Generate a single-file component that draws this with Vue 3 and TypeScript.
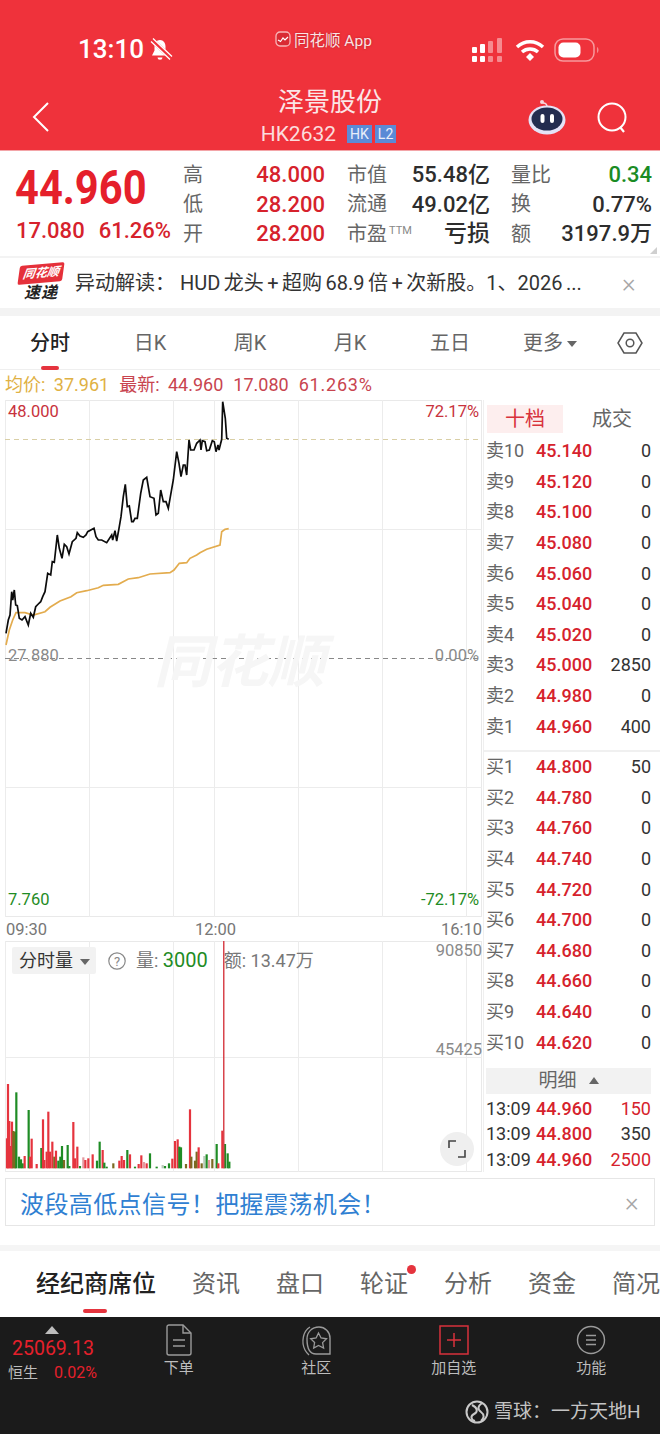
<script setup lang="ts">
const stats = [
  [
    { label: '高', value: '48.000', tone: 'red' },
    { label: '低', value: '28.200', tone: 'red' },
    { label: '开', value: '28.200', tone: 'red' },
  ],
  [
    { label: '市值', value: '55.48亿', tone: 'dark' },
    { label: '流通', value: '49.02亿', tone: 'dark' },
    { label: '市盈', sup: 'TTM', value: '亏损', tone: 'dark big' },
  ],
  [
    { label: '量比', value: '0.34', tone: 'green' },
    { label: '换', value: '0.77%', tone: 'dark' },
    { label: '额', value: '3197.9万', tone: 'dark' },
  ],
]

const periods = ['分时', '日K', '周K', '月K', '五日']

const sells = [
  ['卖10', '45.140', '0'], ['卖9', '45.120', '0'], ['卖8', '45.100', '0'], ['卖7', '45.080', '0'],
  ['卖6', '45.060', '0'], ['卖5', '45.040', '0'], ['卖4', '45.020', '0'], ['卖3', '45.000', '2850'],
  ['卖2', '44.980', '0'], ['卖1', '44.960', '400'],
]
const buys = [
  ['买1', '44.800', '50'], ['买2', '44.780', '0'], ['买3', '44.760', '0'], ['买4', '44.740', '0'],
  ['买5', '44.720', '0'], ['买6', '44.700', '0'], ['买7', '44.680', '0'], ['买8', '44.660', '0'],
  ['买9', '44.640', '0'], ['买10', '44.620', '0'],
]
const ticks = [
  { time: '13:09', price: '44.960', vol: '150', up: true },
  { time: '13:09', price: '44.800', vol: '350', up: false },
  { time: '13:09', price: '44.960', vol: '2500', up: true },
]

const bottomTabs = ['经纪商席位', '资讯', '盘口', '轮证', '分析', '资金', '简况']

const gridX = [5, 89, 173, 214, 298, 382, 466]

// traced at 3x, so everything gets divided by 3 below
const priceRaw = [18,700,25,660,30,645,35,575,38,600,43,570,47,615,52,617,58,655,66,660,75,650,85,675,92,640,100,652,107,620,115,612,122,605,128,590,135,575,143,520,152,525,157,485,163,487,172,405,178,445,186,475,193,433,200,440,207,462,217,425,228,415,232,398,240,408,250,412,258,405,263,395,282,385,288,410,295,420,305,420,320,428,335,405,338,420,345,392,350,423,357,385,363,350,370,290,376,253,382,320,388,318,395,365,400,365,405,355,412,355,422,280,430,240,440,232,450,290,462,295,468,345,475,340,482,270,490,305,498,305,505,325,520,240,530,155,537,190,543,230,550,195,555,195,560,225,567,120,572,150,582,150,590,130,600,120,603,150,607,122,615,125,620,152,628,150,637,122,643,125,648,155,654,135,657,150,665,118,668,5,676,55,680,115,686,118]
const avgRaw = [18,735,28,690,38,660,48,638,75,638,100,645,135,635,150,622,180,603,213,590,230,578,260,572,295,563,310,556,355,553,385,537,415,533,450,522,510,518,522,510,538,490,560,488,570,475,590,465,600,458,620,448,660,435,665,395,675,388,686,386]

function toPoints(raw: number[]): string {
  const out: string[] = []
  for (let i = 0; i < raw.length; i += 2) {
    out.push(`${(raw[i] / 3).toFixed(1)},${(raw[i + 1] / 3).toFixed(1)}`)
  }
  return out.join(' ')
}
const pricePoints = toPoints(priceRaw)
const avgPoints = toPoints(avgRaw)

const barColors: Record<string, string> = {
  r: '#e5343e', g: '#1f8c25', b: '#7b6a22', p: '#e39aa0', s: '#b9c9b9',
}
const rawBars: [number, number, string][] = [
  [21,655,'r'],[24,492,'r'],[28,603,'r'],[32,678,'r'],[36,605,'r'],[40,633,'b'],[45,635,'b'],[49,517,'g'],
  [57,710,'g'],[63,718,'g'],[68,730,'g'],[74,708,'r'],[86,570,'g'],[90,710,'r'],[95,656,'r'],[110,732,'r'],
  [124,684,'g'],[129,598,'r'],[133,720,'r'],[140,695,'r'],[145,575,'r'],[150,695,'r'],[157,665,'r'],[163,710,'b'],
  [168,692,'r'],[175,722,'g'],[181,710,'g'],[186,678,'g'],[192,720,'b'],[203,675,'g'],[208,738,'g'],[220,606,'r'],
  [225,715,'r'],[232,680,'r'],[240,738,'g'],[250,712,'p'],[256,720,'r'],[265,715,'r'],[278,703,'r'],[291,722,'g'],
  [299,665,'g'],[308,690,'r'],[313,728,'g'],[320,740,'g'],[340,730,'b'],[358,722,'r'],[365,708,'r'],[372,720,'r'],
  [382,690,'g'],[390,703,'r'],[405,740,'g'],[416,732,'r'],[424,706,'r'],[432,726,'p'],[440,730,'r'],[450,700,'g'],
  [470,740,'g'],[488,735,'s'],[495,738,'g'],[507,730,'g'],[517,716,'r'],[525,663,'r'],[533,658,'r'],[538,680,'g'],
  [543,682,'g'],[558,732,'b'],[570,568,'r'],[574,710,'b'],[585,722,'b'],[590,695,'b'],[596,682,'r'],[605,730,'b'],
  [613,708,'s'],[620,703,'g'],[627,720,'p'],[637,717,'b'],[650,672,'g'],[655,730,'r'],[667,632,'r'],[675,672,'g'],
  [683,700,'g'],[688,725,'g'],
]
const baseY = 745 / 3 - 21
const volBars = rawBars.map(([x, top, c]) => {
  const y = top / 3 - 21
  return { x: x / 3 - 1.1, y, h: baseY - y, color: barColors[c] }
})
</script>

<template>
  <div class="page">
    <header class="topbar">
      <div class="status">
        <div class="status-left">
          <span class="clock">13:10</span>
          <svg class="bell" width="24" height="24" viewBox="0 0 24 24">
            <path d="M11 3C7.500 3 5.500 6 5.500 9.500v4L3 18.500h16l-2.500-5v-4C16.500 6 14.500 3 11 3z" fill="#fff" />
            <path d="M8.500 20.500h5a2.500 2.300 0 0 1-5 0z" fill="#fff" />
            <path d="M3 3l19 18" stroke="#f1333d" stroke-width="4.500" />
            <path d="M2 4.500l19 18M4 1.500l19 18" stroke="#fff" stroke-width="1.300" />
          </svg>
        </div>
        <div class="app-tag">
          <svg width="16" height="16" viewBox="0 0 16 16">
            <rect x="1" y="1" width="14" height="14" rx="4" fill="#d92a33" stroke="#f8b6b8" stroke-width="1.300" />
            <path d="M3 9l2.500 1.500L8 7l2 2 3-3" stroke="#fff" stroke-width="1.200" fill="none" />
          </svg>
          <span>同花顺 App</span>
        </div>
        <div class="status-right">
          <svg width="34" height="28" viewBox="0 0 34 28">
            <g fill="#fff">
              <rect x="1" y="11" width="5" height="6" rx="1" /><rect x="1" y="20" width="5" height="6" rx="1" />
              <rect x="9" y="8" width="5" height="9" rx="1" /><rect x="9" y="20" width="5" height="6" rx="1" />
            </g>
            <g fill="#f68a8f">
              <rect x="17" y="5" width="5" height="12" rx="1" /><rect x="17" y="20" width="5" height="6" rx="1" />
              <rect x="26" y="2" width="5" height="15" rx="1" /><rect x="26" y="20" width="5" height="6" rx="1" />
            </g>
          </svg>
          <svg class="wifi" width="30" height="24" viewBox="0 0 30 24">
            <path d="M2 9c7.500-7 18.500-7 26 0" stroke="#fff" stroke-width="3.400" fill="none" />
            <path d="M7 14c4.500-4 11.500-4 16 0" stroke="#fff" stroke-width="3.400" fill="none" />
            <path d="M11 19l4-4 4 4-4 4z" fill="#fff" />
          </svg>
          <svg width="46" height="24" viewBox="0 0 46 24">
            <rect x="1" y="1" width="39" height="22" rx="8" fill="none" stroke="#f8999d" stroke-width="1.500" />
            <rect x="4.500" y="4.500" width="22" height="15" rx="5" fill="#fff" />
            <path d="M43 9c2 1 2 5 0 6z" fill="#f68a8f" />
          </svg>
        </div>
      </div>
      <div class="titlebar">
        <svg class="back" width="20" height="32" viewBox="0 0 20 32">
          <path d="M17 2L3 16l14 14" stroke="#fff" stroke-width="2" fill="none" />
        </svg>
        <div class="title">
          <div class="name">泽景股份</div>
          <div class="code">
            <span>HK2632</span>
            <em>HK</em>
            <em>L2</em>
          </div>
        </div>
        <svg class="robot" width="40" height="36" viewBox="0 0 40 36">
          <circle cx="15" cy="3" r="2" fill="#f7d5dc" />
          <path d="M16 4c3 0 4 2 4 4" stroke="#f7d5dc" stroke-width="1.500" fill="none" />
          <ellipse cx="20" cy="21" rx="18.500" ry="14.500" fill="#e4e2f6" />
          <ellipse cx="20" cy="20" rx="15.500" ry="11.500" fill="#232c4f" />
          <rect x="13.500" y="15" width="4" height="9" rx="2" fill="#fff" />
          <rect x="23" y="15" width="4" height="9" rx="2" fill="#fff" />
        </svg>
        <svg class="search" width="32" height="34" viewBox="0 0 32 34">
          <circle cx="16" cy="16" r="13.500" stroke="#fff" stroke-width="2" fill="none" />
          <path d="M24 26l4 5" stroke="#fff" stroke-width="2.200" />
        </svg>
      </div>
    </header>

    <section class="quote">
      <div class="price-block">
        <div class="price">44.960</div>
        <div class="change"><span>17.080</span><span>61.26%</span></div>
      </div>
      <div class="stat-wrap">
        <div v-for="(group, i) in stats" :key="i" class="stat-group" :class="'group-' + i">
          <template v-for="item in group" :key="item.label">
            <span class="stat-label">{{ item.label }}<sup v-if="item.sup">{{ item.sup }}</sup></span>
            <span class="stat-value" :class="item.tone">{{ item.value }}</span>
          </template>
        </div>
      </div>
      <i class="corner"></i>
    </section>

    <section class="news">
      <div class="news-logo">
        <span class="logo-top">同花顺</span>
        <span class="logo-bottom">速递</span>
      </div>
      <p class="news-text">异动解读：<span>HUD 龙头 + 超购 68.9 倍 + 次新股。1、2026 ...</span></p>
      <span class="close">×</span>
    </section>

    <nav class="periods">
      <div v-for="(p, i) in periods" :key="p" class="period" :class="{ active: i === 0 }">{{ p }}</div>
      <div class="period more">更多<i class="caret"></i></div>
      <div class="hex">
        <svg width="26" height="24" viewBox="0 0 26 24">
          <path d="M7 2h12l6 10-6 10H7L1 12z" fill="none" stroke="#555" stroke-width="1.500" />
          <circle cx="13" cy="12" r="3.800" fill="none" stroke="#555" stroke-width="1.500" />
        </svg>
      </div>
    </nav>

    <div class="infoline">
      <span class="gold">均价: 37.961</span>
      <span>最新: 44.960</span>
      <span>17.080</span>
      <span class="pct">61.263%</span>
    </div>

    <main class="market">
      <div class="charts">
        <div class="price-chart">
          <svg width="482" height="517" viewBox="0 0 482 517">
            <rect x="5.500" y="0.500" width="476" height="516" fill="none" stroke="#e9e9e9" />
            <line v-for="x in gridX" :key="x" :x1="x + 0.5" :x2="x + 0.5" y1="0" y2="517" stroke="#ececec" />
            <line x1="5" x2="482" y1="129.500" y2="129.500" stroke="#ececec" />
            <line x1="5" x2="482" y1="387.500" y2="387.500" stroke="#ececec" />
            <line x1="5" x2="482" y1="39.500" y2="39.500" stroke="#d9cfa6" stroke-dasharray="5 4" />
            <line x1="5" x2="482" y1="258.500" y2="258.500" stroke="#888" stroke-dasharray="5 4" />
            <text class="wm" x="154" y="282">同花顺</text>
            <polyline :points="avgPoints" fill="none" stroke="#e3ac4e" stroke-width="1.700" />
            <polyline :points="pricePoints" fill="none" stroke="#0c0c0c" stroke-width="1.700" />
            <text class="axis" x="8" y="17" fill="#c8323c">48.000</text>
            <text class="axis" x="479" y="17" text-anchor="end" fill="#c8323c">72.17%</text>
            <text class="axis" x="8" y="261" fill="#8a8a8a">27.880</text>
            <text class="axis" x="479" y="261" text-anchor="end" fill="#8a8a8a">0.00%</text>
            <text class="axis" x="8" y="505" fill="#1f8c25">7.760</text>
            <text class="axis" x="479" y="505" text-anchor="end" fill="#1f8c25">-72.17%</text>
          </svg>
        </div>
        <div class="time-row">
          <span>09:30</span>
          <span class="noon">12:00</span>
          <span>16:10</span>
        </div>
        <div class="vol-chart">
          <svg width="482" height="231" viewBox="0 0 482 231">
            <rect x="5.500" y="0.500" width="476" height="230" fill="none" stroke="#e9e9e9" />
            <line v-for="x in gridX" :key="x" :x1="x + 0.5" :x2="x + 0.5" y1="0" y2="231" stroke="#ececec" />
            <line x1="5" x2="482" y1="116.500" y2="116.500" stroke="#ececec" />
            <rect v-for="(b, i) in volBars" :key="i" :x="b.x" :y="b.y" width="2.200" :height="b.h" :fill="b.color" />
            <rect x="223" y="0" width="1.500" :height="baseY" fill="#d8444c" />
            <text class="axis" x="482" y="15" text-anchor="end" fill="#8a8a8a">90850</text>
            <text class="axis" x="482" y="114" text-anchor="end" fill="#8a8a8a">45425</text>
          </svg>
          <div class="vol-head">
            <div class="vol-select">分时量<i class="caret dark"></i></div>
            <svg width="20" height="20" viewBox="0 0 20 20">
              <circle cx="10" cy="10" r="8.200" fill="none" stroke="#888" stroke-width="1.200" />
              <text x="10" y="14.500" text-anchor="middle" class="help">?</text>
            </svg>
            <span class="vol-num">量: <b>3000</b></span>
            <span class="vol-amt">额: 13.47万</span>
          </div>
          <button class="expand" type="button">
            <svg width="18" height="18" viewBox="0 0 18 18">
              <path d="M1 8V1h7M17 10v7h-7" fill="none" stroke="#444" stroke-width="1.600" />
            </svg>
          </button>
        </div>
      </div>

      <aside class="book">
        <div class="book-tabs">
          <div class="book-tab on">十档</div>
          <div class="book-tab">成交</div>
        </div>
        <div class="levels">
          <div v-for="r in sells" :key="r[0]" class="level">
            <span class="lv">{{ r[0] }}</span><span class="px">{{ r[1] }}</span><span class="qty">{{ r[2] }}</span>
          </div>
        </div>
        <div class="levels buys">
          <div v-for="r in buys" :key="r[0]" class="level">
            <span class="lv">{{ r[0] }}</span><span class="px">{{ r[1] }}</span><span class="qty">{{ r[2] }}</span>
          </div>
        </div>
        <div class="detail-head">明细<i class="up"></i></div>
        <div v-for="(t, i) in ticks" :key="i" class="tick">
          <span class="tm">{{ t.time }}</span>
          <span class="px">{{ t.price }}</span>
          <span class="qty" :class="{ red: t.up }">{{ t.vol }}</span>
        </div>
      </aside>
    </main>

    <div class="promo">
      <span>波段高低点信号！把握震荡机会！</span>
      <span class="close">×</span>
    </div>

    <nav class="bottom-tabs">
      <div v-for="(t, i) in bottomTabs" :key="t" class="btab" :class="{ active: i === 0, dot: t === '轮证' }">{{ t }}</div>
    </nav>

    <footer class="dock">
      <div class="dock-row">
        <div class="index">
          <i class="tri"></i>
          <div class="idx-val">25069.13</div>
          <div class="idx-sub"><span>恒生</span><b>0.02%</b></div>
        </div>
        <div class="dock-item">
          <svg width="28" height="32" viewBox="0 0 28 32">
            <path d="M2 3a2 2 0 0 1 2-2h14l8 8v20a2 2 0 0 1-2 2H4a2 2 0 0 1-2-2z" fill="none" stroke="#9a9a9a" stroke-width="1.400" />
            <path d="M18 1v8h8M8 16h12M8 22h12" fill="none" stroke="#9a9a9a" stroke-width="1.400" />
          </svg>
          <span>下单</span>
        </div>
        <div class="dock-item">
          <svg width="32" height="32" viewBox="0 0 32 32">
            <path d="M10 3C3 7 1 18 5 26c1 2 2 3 4 5" fill="none" stroke="#9a9a9a" stroke-width="1.300" />
            <path d="M19 3c6 0 11 5 11 11v16H16C10 30 7 24 7 15 7 8 12 3 19 3z" fill="none" stroke="#9a9a9a" stroke-width="1.400" />
            <path d="M18.500 9l2.600 5 5.400.8-3.900 3.800 1 5.400-5.100-2.600-4.800 2.600.9-5.400-3.900-3.800 5.400-.8z" fill="none" stroke="#9a9a9a" stroke-width="1.300" />
          </svg>
          <span>社区</span>
        </div>
        <div class="dock-item">
          <svg width="30" height="32" viewBox="0 0 30 32">
            <rect x="1" y="2" width="28" height="28" fill="none" stroke="#d8323c" stroke-width="1.500" />
            <path d="M15 9v14M8 16h14" stroke="#d8323c" stroke-width="1.500" />
          </svg>
          <span>加自选</span>
        </div>
        <div class="dock-item">
          <svg width="30" height="32" viewBox="0 0 30 32">
            <circle cx="15" cy="16" r="13.500" fill="none" stroke="#9a9a9a" stroke-width="1.400" />
            <path d="M10 11.500h10M10 16h10M10 20.500h10" stroke="#9a9a9a" stroke-width="1.400" />
          </svg>
          <span>功能</span>
        </div>
      </div>
      <div class="credit">
        <svg width="24" height="24" viewBox="0 0 24 24">
          <circle cx="12" cy="12" r="10.500" fill="none" stroke="#c9c9c9" stroke-width="2" />
          <path d="M7 5c6 3 6 7 2 9s-3 6 1 7M17 3c-4 3-5 6-1 9s3 6 0 9" fill="none" stroke="#c9c9c9" stroke-width="2" />
        </svg>
        <span>雪球：一方天地H</span>
      </div>
    </footer>
  </div>
</template>

<style>
html,
body {
  margin: 0;
  background: #fff;
}
</style>

<style scoped>
.page {
  width: 660px;
  height: 1434px;
  overflow: hidden;
  display: flex;
  flex-direction: column;
  background: #fff;
  font-family: Roboto, "Noto Sans CJK SC", sans-serif;
  color: #333;
}

.topbar {
  height: 150px;
  flex: none;
  background: #ef323b;
  color: #fff;
  border-bottom: 1px solid #f3a5a8;
  box-sizing: content-box;
}

.status {
  height: 84px;
  position: relative;
  display: flex;
  justify-content: space-between;
  padding: 0 60px 0 78px;
}

.status-left {
  display: flex;
  align-items: center;
  gap: 5px;
  padding-top: 14px;
  height: 70px;
}

.clock {
  font-size: 26px;
  font-weight: 500;
}

.app-tag {
  position: absolute;
  left: 275px;
  top: 28px;
  display: flex;
  align-items: center;
  gap: 3px;
  font-size: 15.500px;
  color: #fbe3e4;
  text-shadow: 0 0 2px rgba(110, 10, 20, 0.5);
}

.status-right {
  display: flex;
  align-items: center;
  gap: 10px;
  padding-top: 16px;
  height: 68px;
  margin-right: 2px;
}

.status-right svg:last-child {
  margin-right: -2px;
  margin-left: -1px;
}

.titlebar {
  position: relative;
  height: 66px;
  display: flex;
  justify-content: center;
}

.back {
  position: absolute;
  left: 31px;
  top: 17px;
}

.title {
  text-align: center;
  padding-top: 1px;
}

.name {
  font-size: 26px;
  line-height: 34px;
  color: #fbe6e7;
}

.code {
  display: flex;
  align-items: center;
  gap: 3px;
  font-size: 21px;
  line-height: 26px;
  margin-top: 2px;
  margin-left: -3px;
  color: #fbdcdd;
}

.code em {
  font-style: normal;
  font-size: 14px;
  line-height: 18px;
  padding: 0 3px;
  background: #5b8ad6;
  color: #e8eefa;
}

.code span {
  margin-right: 8px;
}

.robot {
  position: absolute;
  left: 527px;
  top: 15px;
}

.search {
  position: absolute;
  left: 596px;
  top: 17px;
}

.quote {
  position: relative;
  height: 105px;
  flex: none;
  display: flex;
  padding-left: 15px;
  box-sizing: border-box;
}

.price-block {
  width: 168px;
  flex: none;
}

.price {
  font-size: 49px;
  font-weight: 700;
  color: #e5202b;
  line-height: 50px;
  margin-top: 12px;
  transform: scaleX(0.85);
  transform-origin: left center;
  white-space: nowrap;
}

.change {
  display: flex;
  gap: 14px;
  font-size: 22px;
  font-weight: 500;
  line-height: 30px;
  margin-top: 3px;
  margin-left: 1px;
  color: #d6222c;
  white-space: nowrap;
}

.stat-wrap {
  display: flex;
  padding-top: 9px;
}

.stat-group {
  display: grid;
  grid-template-columns: auto 1fr;
  grid-auto-rows: 29.500px;
  align-items: center;
  width: 142px;
}

.group-1 {
  width: 140px;
  margin-left: 22px;
}

.group-2 {
  width: 141px;
  margin-left: 24px;
}

.stat-label {
  font-size: 20px;
  line-height: 29px;
  padding-top: 1px;
  color: #666;
  white-space: nowrap;
}

.stat-label sup {
  font-size: 11px;
  vertical-align: 7px;
  line-height: 0;
  margin-left: 2px;
  color: #888;
}

.stat-value {
  text-align: right;
  font-size: 22px;
  line-height: 29px;
  font-weight: 500;
  white-space: nowrap;
}

.stat-value.red {
  color: #d6222c;
}

.stat-value.green {
  color: #1a8c24;
}

.stat-value.dark {
  color: #2d2d2d;
}

.stat-value.big {
  font-size: 23px;
}

.corner {
  position: absolute;
  right: 3px;
  bottom: 2px;
  width: 0;
  height: 0;
  border-left: 7px solid transparent;
  border-bottom: 7px solid #cfcfcf;
}

.news {
  height: 50px;
  flex: none;
  border-top: 2px solid #f3f3f3;
  border-bottom: 8px solid #f3f3f3;
  display: flex;
  align-items: center;
  padding-left: 18px;
  box-sizing: content-box;
}

.news-logo {
  width: 46px;
  flex: none;
  display: flex;
  flex-direction: column;
  align-items: center;
}

.logo-top {
  background: #e5303a;
  color: #fff;
  font-size: 12px;
  line-height: 19px;
  font-weight: 700;
  font-style: italic;
  width: 44px;
  text-align: center;
  transform: skewX(-8deg) skewY(-5deg);
  border-radius: 2px;
}

.logo-bottom {
  font-size: 16px;
  line-height: 20px;
  font-weight: 700;
  font-style: italic;
  letter-spacing: 1px;
  color: #222;
}

.news-text {
  margin: 0 0 0 11px;
  font-size: 20px;
  line-height: 28px;
  color: #333;
  white-space: nowrap;
  width: 542px;
  overflow: hidden;
  flex: none;
}

.news-text span {
  margin-left: 5px;
  word-spacing: -1.500px;
}

.close {
  font-size: 26px;
  line-height: 26px;
  color: #a6a6a6;
  font-weight: 300;
}

.news .close {
  margin-left: 5px;
}

.periods {
  height: 53px;
  flex: none;
  border-bottom: 1px solid #efefef;
  display: grid;
  grid-template-columns: repeat(6, 100px) 60px;
  align-items: center;
}

.period {
  position: relative;
  text-align: center;
  font-size: 20px;
  color: #666;
  line-height: 54px;
}

.period.active {
  color: #222;
  font-weight: 500;
}

.period.active::after {
  content: '';
  position: absolute;
  left: 41px;
  bottom: 0;
  width: 18px;
  height: 4px;
  border-radius: 2px;
  background: #e5343e;
}

.caret {
  display: inline-block;
  margin-left: 4px;
  vertical-align: 3px;
  border-left: 5px solid transparent;
  border-right: 5px solid transparent;
  border-top: 6px solid #666;
}

.hex {
  display: flex;
  justify-content: center;
}

.infoline {
  height: 30px;
  flex: none;
  display: flex;
  align-items: center;
  gap: 10px;
  padding-left: 5px;
  font-size: 18px;
  line-height: 32px;
  word-spacing: 4px;
  color: #c8444f;
  white-space: nowrap;
}

.gold {
  color: #dfb144;
}

.pct {
  letter-spacing: 0.800px;
}

.market {
  height: 772px;
  flex: none;
  display: flex;
}

.charts {
  width: 482px;
  flex: none;
}

.price-chart,
.vol-chart {
  position: relative;
}

.price-chart svg,
.vol-chart svg {
  display: block;
}

.price-chart {
  height: 517px;
}

.axis {
  font-size: 16.500px;
  font-family: Roboto, sans-serif;
}

.wm {
  font-size: 57px;
  font-weight: 700;
  font-style: italic;
  fill: #f6f6f6;
  font-family: "Noto Sans CJK SC", sans-serif;
}

.time-row {
  height: 24px;
  position: relative;
  display: flex;
  justify-content: space-between;
  align-items: center;
  padding-left: 6px;
  font-size: 16.500px;
  color: #777;
}

.noon {
  position: absolute;
  left: 195px;
}

.vol-chart {
  height: 231px;
}

.vol-head {
  position: absolute;
  left: 12px;
  top: 6px;
  display: flex;
  align-items: center;
  font-size: 18px;
  line-height: 27px;
  color: #777;
  white-space: nowrap;
}

.vol-select {
  width: 84px;
  height: 27px;
  padding-left: 7px;
  box-sizing: border-box;
  background: #f2f2f2;
  border-radius: 2px;
  color: #333;
  margin-right: 11px;
}

.caret.dark {
  margin-left: 7px;
  vertical-align: 2px;
}

.help {
  font-size: 13px;
  fill: #888;
}

.vol-num {
  margin-left: 9px;
}

.vol-num b {
  font-weight: 400;
  font-size: 20px;
  color: #1f8c25;
}

.vol-amt {
  margin-left: 16px;
}

.expand {
  position: absolute;
  left: 440px;
  top: 191px;
  width: 34px;
  height: 34px;
  padding: 0;
  border: 0;
  border-radius: 50%;
  background: #efefef;
  display: flex;
  align-items: center;
  justify-content: center;
}

.book {
  width: 177px;
  flex: none;
  box-sizing: border-box;
  padding: 5px 9px 0 2px;
  border-left: 1px solid #efefef;
  margin-left: 1px;
  font-size: 18px;
  line-height: 24px;
}

.book-tabs {
  display: flex;
  height: 28px;
  margin-bottom: 3px;
  margin-left: 1px;
}

.book-tab {
  width: 76px;
  flex: none;
  text-align: center;
  font-size: 20px;
  line-height: 28px;
  color: #666;
}

.book-tab + .book-tab {
  width: 98px;
}

.book-tab.on {
  background: #fdeeee;
  color: #d8323c;
}

.levels {
  display: grid;
  grid-auto-rows: 30.600px;
}

.buys {
  margin-top: 8px;
  margin-left: -2px;
  padding-left: 2px;
  margin-right: -9px;
  padding-right: 9px;
  border-top: 2px solid #f0f0f0;
}

.level,
.tick {
  display: flex;
  align-items: center;
  white-space: nowrap;
}

.lv {
  width: 50px;
  color: #666;
}

.px {
  font-weight: 500;
  color: #d6222c;
}

.qty {
  margin-left: auto;
  color: #333;
}

.qty.red {
  color: #d6222c;
}

.detail-head {
  height: 26px;
  margin-top: 10px;
  margin-bottom: 2px;
  background: #f2f2f2;
  text-align: center;
  line-height: 26px;
  font-size: 19px;
  color: #666;
}

.up {
  display: inline-block;
  margin-left: 12px;
  vertical-align: 3px;
  border-left: 5px solid transparent;
  border-right: 5px solid transparent;
  border-bottom: 7px solid #666;
}

.tick {
  height: 25.500px;
}

.tm {
  width: 50px;
  color: #333;
}

.promo {
  height: 48px;
  flex: none;
  margin: 6px 5px 19px;
  border: 1px solid #e6e6e6;
  box-sizing: border-box;
  display: flex;
  align-items: center;
  justify-content: space-between;
  padding: 0 15px 0 14px;
  font-size: 24px;
  letter-spacing: 0.400px;
  color: #2f80d2;
}

.bottom-tabs {
  height: 66px;
  flex: none;
  border-top: 6px solid #f5f5f5;
  display: flex;
  gap: 36px;
  padding-left: 36px;
  align-items: center;
  box-sizing: content-box;
  white-space: nowrap;
}

.btab {
  position: relative;
  font-size: 24px;
  line-height: 68px;
  color: #666;
}

.btab.active {
  color: #222;
  font-weight: 500;
}

.btab.active::after {
  content: '';
  position: absolute;
  left: 47px;
  bottom: 5px;
  width: 24px;
  height: 4px;
  border-radius: 2px;
  background: #e5343e;
}

.btab.dot::after {
  content: '';
  position: absolute;
  right: -8px;
  top: 15px;
  width: 9px;
  height: 9px;
  border-radius: 50%;
  background: #e5343e;
}

.dock {
  flex: 1;
  background: #1b1b1b;
  color: #bdbdbd;
  position: relative;
}

.dock-row {
  display: flex;
  padding-top: 7px;
}

.index {
  width: 110px;
  flex: none;
  padding-left: 8px;
  box-sizing: border-box;
}

.tri {
  display: block;
  width: 0;
  margin: 2px 0 2px 37px;
  border-left: 7px solid transparent;
  border-right: 7px solid transparent;
  border-bottom: 8px solid #bdbdbd;
}

.idx-val {
  font-size: 19.500px;
  line-height: 26px;
  color: #e5202b;
  margin-left: 4px;
}

.idx-sub {
  display: flex;
  gap: 16px;
  font-size: 15px;
  line-height: 22px;
}

.idx-sub b {
  font-weight: 400;
  font-size: 16px;
  color: #e5202b;
}

.dock-item {
  width: 137.500px;
  flex: none;
  display: flex;
  flex-direction: column;
  align-items: center;
  gap: 2px;
  font-size: 15px;
  line-height: 20px;
}

.credit {
  position: absolute;
  left: 465px;
  top: 83px;
  display: flex;
  align-items: center;
  gap: 5px;
  font-size: 19px;
  line-height: 24px;
  color: #c4c4c4;
  white-space: nowrap;
}
</style>
